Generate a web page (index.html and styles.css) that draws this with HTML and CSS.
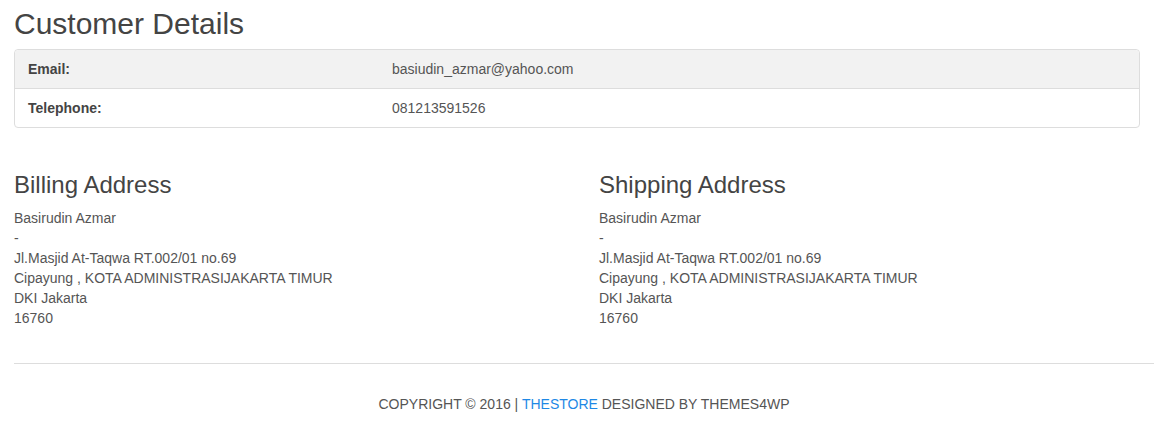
FILE: index.html
```html
<!DOCTYPE html>
<html lang="en">
<head>
    <meta charset="UTF-8">
    <meta name="viewport" content="width=device-width, initial-scale=1.0">
    <title>Customer Details</title>
    <link rel="stylesheet" href="styles.css">
</head>
<body>

    <div class="page">
        <h2>Customer Details</h2>

        <table class="details">
            <tr class="shaded">
                <th>Email:</th>
                <td>basiudin_azmar@yahoo.com</td>
            </tr>
            <tr>
                <th>Telephone:</th>
                <td>081213591526</td>
            </tr>
        </table>

        <div class="addresses">
            <div class="col">
                <h3>Billing Address</h3>
                <address>
                    Basirudin Azmar<br>
                    -<br>
                    Jl.Masjid At-Taqwa RT.002/01 no.69<br>
                    Cipayung , KOTA ADMINISTRASIJAKARTA TIMUR<br>
                    DKI Jakarta<br>
                    16760
                </address>
            </div>
            <div class="col">
                <h3>Shipping Address</h3>
                <address>
                    Basirudin Azmar<br>
                    -<br>
                    Jl.Masjid At-Taqwa RT.002/01 no.69<br>
                    Cipayung , KOTA ADMINISTRASIJAKARTA TIMUR<br>
                    DKI Jakarta<br>
                    16760
                </address>
            </div>
        </div>

        <footer class="footer">
            COPYRIGHT &copy; 2016 | <a href="#">THESTORE</a> DESIGNED BY THEMES4WP
        </footer>
    </div>

</body>
</html>
```

FILE: styles.css
```css
body {
    font-family: "Liberation Sans", Arial, sans-serif;
    font-size: 14px;
    line-height: 20px;
    color: #555;
    background-color: #fff;
    margin: 0;
}
.page {
    padding: 0 14px;
}
h2 {
    font-size: 30px;
    font-weight: normal;
    line-height: 33px;
    color: #444;
    margin: 7px 0 9px;
}
h3 {
    font-size: 24px;
    font-weight: normal;
    line-height: 26px;
    color: #444;
    margin: 0 0 10px;
}
.details {
    width: calc(100% - 14px);
    border: 1px solid #ddd;
    border-radius: 4px;
    border-spacing: 0;
    margin-bottom: 44px;
}
.details th,
.details td {
    text-align: left;
    padding: 9px 13px;
    line-height: 20px;
}
.details th {
    width: 338px;
    font-weight: bold;
    color: #444;
}
.details tr.shaded th,
.details tr.shaded td {
    background: #f2f2f2;
    border-bottom: 1px solid #ddd;
}
.details tr.shaded th {
    border-top-left-radius: 4px;
}
.details tr.shaded td {
    border-top-right-radius: 4px;
}
.addresses {
    display: grid;
    grid-template-columns: 1fr 1fr;
    column-gap: 30px;
    padding-bottom: 35px;
    border-bottom: 1px solid #ddd;
}
address {
    font-style: normal;
}
.footer {
    text-align: center;
    padding: 30px 0 12px;
}
.footer a {
    color: #1e88e5;
    text-decoration: none;
}
```
